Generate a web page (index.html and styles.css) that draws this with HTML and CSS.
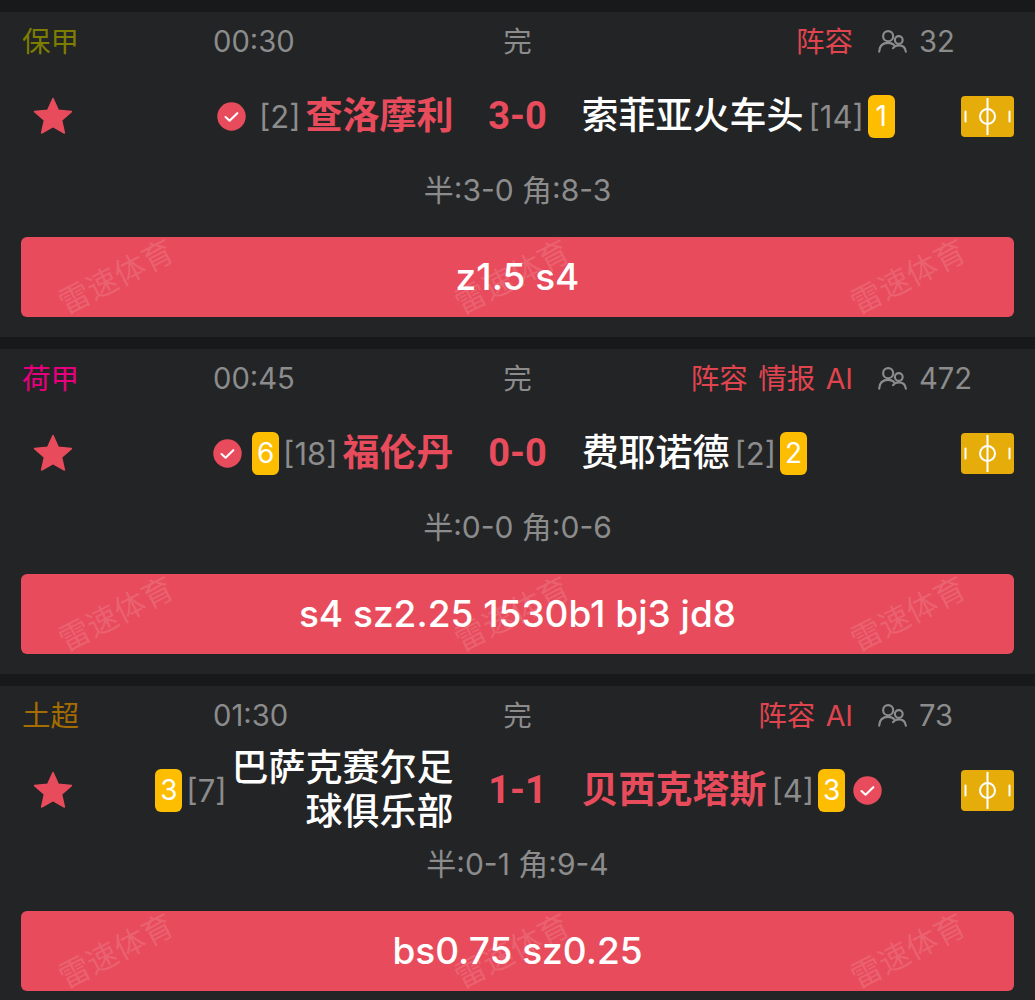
FILE: index.html
```html
<!DOCTYPE html>
<html lang="zh-CN">
<head>
<meta charset="utf-8">
<title>比赛列表</title>
<link rel="stylesheet" href="styles.css">
</head>
<body>
<svg class="defs" aria-hidden="true">
  <symbol id="star" viewBox="0 0 40 38"><path d="M20 1.500 25.300 13.200 38.400 14.600 28.600 23.300 31.400 36 20 29.500 8.600 36 11.400 23.300 1.600 14.600 14.700 13.200Z" fill="#e84c5c" stroke="#e84c5c" stroke-width="1.500" stroke-linejoin="round"/></symbol>
  <symbol id="check" viewBox="0 0 30 30"><circle cx="15" cy="15" r="14.700" fill="#e84c5c"/><path d="M8.800 15.600 13 19.400 21 11.600" fill="none" stroke="#fff" stroke-width="2.200" stroke-linecap="round" stroke-linejoin="round"/></symbol>
  <symbol id="people" viewBox="0 0 30 24"><g fill="none" stroke="#8c8c8c" stroke-width="2.200" stroke-linecap="round"><circle cx="10.500" cy="7" r="5.200"/><path d="M1.200 23C1.500 17 5 14 10.500 14c2.500 0 4.500.7 6 2"/><circle cx="21.500" cy="11" r="4"/><path d="M15.500 19.500c1.400-2 3.400-3 6-3 4 0 6.800 2.500 7.300 6.500"/></g></symbol>
  <symbol id="pitch" viewBox="0 0 53 41"><rect width="53" height="41" rx="4" fill="#e6ad0a"/><g fill="none" stroke="#fff" stroke-width="2"><path d="M26.500 2V39"/><circle cx="26.500" cy="20.500" r="7.500"/><path d="M4.500 15.500V25.500M48.500 15.500V25.500" stroke-linecap="round"/></g></symbol>
</svg>

<main class="list">
  <section class="card">
    <header class="meta">
      <div class="meta-left"><span class="league league-bg">保甲</span><span class="time">00:30</span></div>
      <span class="status">完</span>
      <div class="meta-right"><span class="links">阵容</span><span class="people"><svg class="people-icon"><use href="#people"/></svg><span class="count">32</span></span></div>
    </header>
    <div class="match">
      <div class="home">
        <svg class="star"><use href="#star"/></svg>
        <div class="team team-home">
          <svg class="check"><use href="#check"/></svg>
          <span class="rank">[2]</span>
          <span class="name win">查洛摩利</span>
        </div>
      </div>
      <div class="score">3-0</div>
      <div class="away">
        <div class="team">
          <span class="name">索菲亚火车头</span>
          <span class="rank">[14]</span>
          <span class="badge">1</span>
        </div>
        <svg class="pitch"><use href="#pitch"/></svg>
      </div>
    </div>
    <p class="half">半:3-0 角:8-3</p>
    <div class="tip">z1.5 s4
      <div class="marks"><span>雷速体育</span><span>雷速体育</span><span>雷速体育</span></div>
    </div>
  </section>

  <section class="card">
    <header class="meta">
      <div class="meta-left"><span class="league league-nl">荷甲</span><span class="time">00:45</span></div>
      <span class="status">完</span>
      <div class="meta-right"><span class="links">阵容 情报 AI</span><span class="people"><svg class="people-icon"><use href="#people"/></svg><span class="count">472</span></span></div>
    </header>
    <div class="match">
      <div class="home">
        <svg class="star"><use href="#star"/></svg>
        <div class="team team-home">
          <svg class="check"><use href="#check"/></svg>
          <span class="badge">6</span>
          <span class="rank">[18]</span>
          <span class="name win">福伦丹</span>
        </div>
      </div>
      <div class="score">0-0</div>
      <div class="away">
        <div class="team">
          <span class="name">费耶诺德</span>
          <span class="rank">[2]</span>
          <span class="badge">2</span>
        </div>
        <svg class="pitch"><use href="#pitch"/></svg>
      </div>
    </div>
    <p class="half">半:0-0 角:0-6</p>
    <div class="tip">s4 sz2.25 1530b1 bj3 jd8
      <div class="marks"><span>雷速体育</span><span>雷速体育</span><span>雷速体育</span></div>
    </div>
  </section>

  <section class="card">
    <header class="meta">
      <div class="meta-left"><span class="league league-tr">土超</span><span class="time">01:30</span></div>
      <span class="status">完</span>
      <div class="meta-right"><span class="links">阵容 AI</span><span class="people"><svg class="people-icon"><use href="#people"/></svg><span class="count">73</span></span></div>
    </header>
    <div class="match">
      <div class="home">
        <svg class="star"><use href="#star"/></svg>
        <div class="team team-home">
          <span class="badge">3</span>
          <span class="rank">[7]</span>
          <span class="name">巴萨克赛尔足球俱乐部</span>
        </div>
      </div>
      <div class="score">1-1</div>
      <div class="away">
        <div class="team">
          <span class="name win">贝西克塔斯</span>
          <span class="rank">[4]</span>
          <span class="badge">3</span>
          <svg class="check check-away"><use href="#check"/></svg>
        </div>
        <svg class="pitch"><use href="#pitch"/></svg>
      </div>
    </div>
    <p class="half">半:0-1 角:9-4</p>
    <div class="tip">bs0.75 sz0.25
      <div class="marks"><span>雷速体育</span><span>雷速体育</span><span>雷速体育</span></div>
    </div>
  </section>
</main>
</body>
</html>
```
FILE: styles.css
```css
* { box-sizing: border-box; }
html, body { margin: 0; height: 1000px; overflow: hidden; }
body {
  background: #18191b;
  color: #8c8c8c;
  font-family: Inter, "Noto Sans CJK SC", sans-serif;
  font-size: 28.5px;
}
.defs { display: none; }
.list { display: flex; flex-direction: column; gap: 12px; padding-top: 12px; }
.card {
  flex: none;
  height: 325px;
  padding: 0 21px 20px;
  background: #232426;
  display: flex;
  flex-direction: column;
}
.meta {
  height: 54px;
  margin-bottom: 4px;
  display: grid;
  grid-template-columns: 1fr auto 1fr;
  align-items: center;
}
.meta-left { display: flex; align-items: center; padding-left: 1px; }
.league { width: 191px; }
.league-bg { color: #7d7d00; }
.league-nl { color: #e6007e; }
.league-tr { color: #a56c00; }
.time { font-size: 29.2px; padding-top: 4px; }
.count { font-size: 29.2px; }
.meta-right { display: flex; align-items: center; justify-content: flex-end; }
.links { color: #e0444f; margin-right: 25px; word-spacing: 2.5px; }
.people { width: 136px; display: flex; align-items: center; gap: 12px; padding-top: 4px; }
.people-icon { width: 29px; height: 24px; flex: none; }
.match {
  height: 92px;
  display: grid;
  grid-template-columns: 1fr 128px 1fr;
  align-items: center;
}
.home { display: flex; align-items: center; justify-content: space-between; padding-left: 12px; }
.away { display: flex; align-items: center; justify-content: space-between; }
.star { width: 40px; height: 38px; flex: none; }
.team { display: flex; align-items: center; gap: 5px; }
.name {
  font-size: 37px;
  line-height: 44px;
  font-weight: 500;
  color: #fff;
  max-width: 222px;
}
.team-home .name { text-align: right; }
.name.win { color: #e84c5c; font-weight: 700; }
.rank { font-size: 31px; color: #8c8c8c; }
.badge + .rank { margin-left: -1px; }
.rank + .badge { margin-left: -1px; }
.badge {
  width: 27px;
  height: 43px;
  border-radius: 6px;
  background: #fdbd00;
  color: #fff;
  display: flex;
  align-items: center;
  justify-content: center;
  font-size: 28px;
}
.check { width: 29px; height: 29px; flex: none; margin-right: 5px; }
.check + .rank { margin-left: 3px; }
.check-away { margin: 0 0 0 3px; }
.score {
  text-align: center;
  font-family: Roboto, sans-serif;
  font-size: 38px;
  font-weight: 700;
  color: #e84c5c;
}
.pitch { width: 53px; height: 41px; flex: none; }
.half { margin: 0; height: 56px; line-height: 56px; text-align: center; font-size: 30px; }
.tip {
  position: relative;
  margin-top: 19px;
  height: 80px;
  border-radius: 6px;
  background: #e84c5c;
  color: #fff;
  font-size: 37px;
  font-weight: 500;
  line-height: 80px;
  text-align: center;
}
.marks {
  position: absolute;
  inset: 0;
  display: flex;
  justify-content: space-between;
  align-items: center;
  padding: 0 44px 2px 33px;
}
.marks span {
  font-size: 31px;
  font-weight: 400;
  line-height: 1;
  white-space: nowrap;
  color: rgba(255, 255, 255, 0.13);
  transform: rotate(-27deg);
}
```
